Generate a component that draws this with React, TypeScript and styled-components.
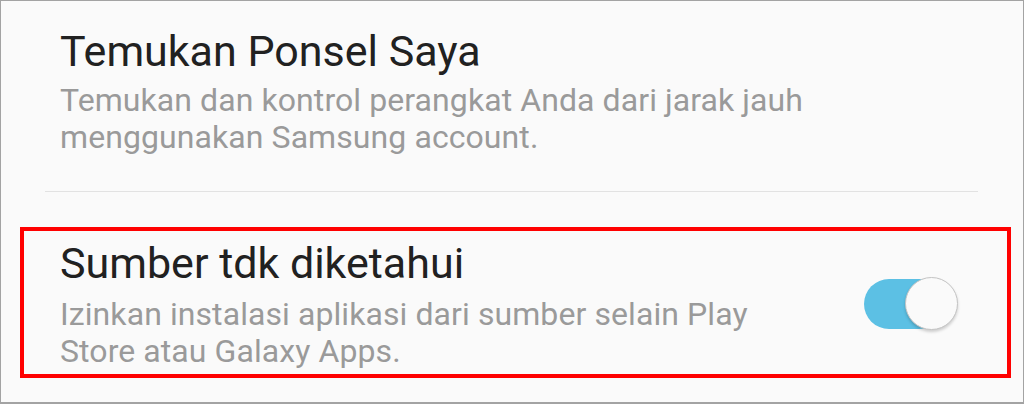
import React from "react";
import styled, { createGlobalStyle } from "styled-components";

const Global = createGlobalStyle`
  html, body { margin: 0; padding: 0; background: #fafafa; }
  body { font-family: Roboto, "Noto Sans", "Liberation Sans", sans-serif; }
`;

const Frame = styled.div`
  box-sizing: border-box;
  width: 1024px;
  height: 404px;
  border: 1px solid #a3a3a3;
  border-bottom-width: 2px;
  background: #fafafa;
  display: flex;
  flex-direction: column;
  overflow: hidden;
`;

const Item = styled.div<{ $pt: number; $pl: number; $pb: number }>`
  display: flex;
  align-items: center;
  padding: ${(p) => p.$pt}px 49px ${(p) => p.$pb}px ${(p) => p.$pl}px;
`;

const TextCol = styled.div<{ $gap: number }>`
  flex: 1;
  display: flex;
  flex-direction: column;
  gap: ${(p) => p.$gap}px;
`;

const Title = styled.div`
  font-size: 43px;
  line-height: 50px;
  color: #212121;
`;

const Summary = styled.div`
  font-size: 32px;
  line-height: 37px;
  letter-spacing: 0.08px;
  color: #9a9a9a;
`;

const Divider = styled.div`
  height: 1px;
  background: #e2e2e2;
  margin: 35px 45px 0 44px;
`;

const Highlight = styled.div`
  margin: 35px 12px 0 19px;
  border: 4px solid #ff0000;
`;

const Switch = styled.div`
  position: relative;
  width: 94px;
  height: 54px;
  flex: none;
`;

const Track = styled.div`
  position: absolute;
  left: 0;
  top: 2px;
  width: 80px;
  height: 50px;
  border-radius: 25px;
  background: #5cc0e4;
`;

const Knob = styled.div`
  position: absolute;
  right: 0;
  top: 0;
  width: 53px;
  height: 53px;
  box-sizing: border-box;
  border-radius: 50%;
  background: #fafafa;
  border: 1px solid #c4c4c4;
  box-shadow: 0 2px 3px rgba(0, 0, 0, 0.18);
`;

export default function App() {
  return (
    <>
      <Global />
      <Frame>
        <Item $pt={25} $pl={59} $pb={0}>
          <TextCol $gap={6}>
            <Title>Temukan Ponsel Saya</Title>
            <Summary>
              Temukan dan kontrol perangkat Anda dari jarak jauh
              <br />
              menggunakan Samsung account.
            </Summary>
          </TextCol>
        </Item>
        <Divider />
        <Highlight>
          <Item $pt={7} $pl={36} $pb={4}>
            <TextCol $gap={8}>
              <Title>Sumber tdk diketahui</Title>
              <Summary>
                Izinkan instalasi aplikasi dari sumber selain Play
                <br />
                Store atau Galaxy Apps.
              </Summary>
            </TextCol>
            <Switch>
              <Track />
              <Knob />
            </Switch>
          </Item>
        </Highlight>
      </Frame>
    </>
  );
}
